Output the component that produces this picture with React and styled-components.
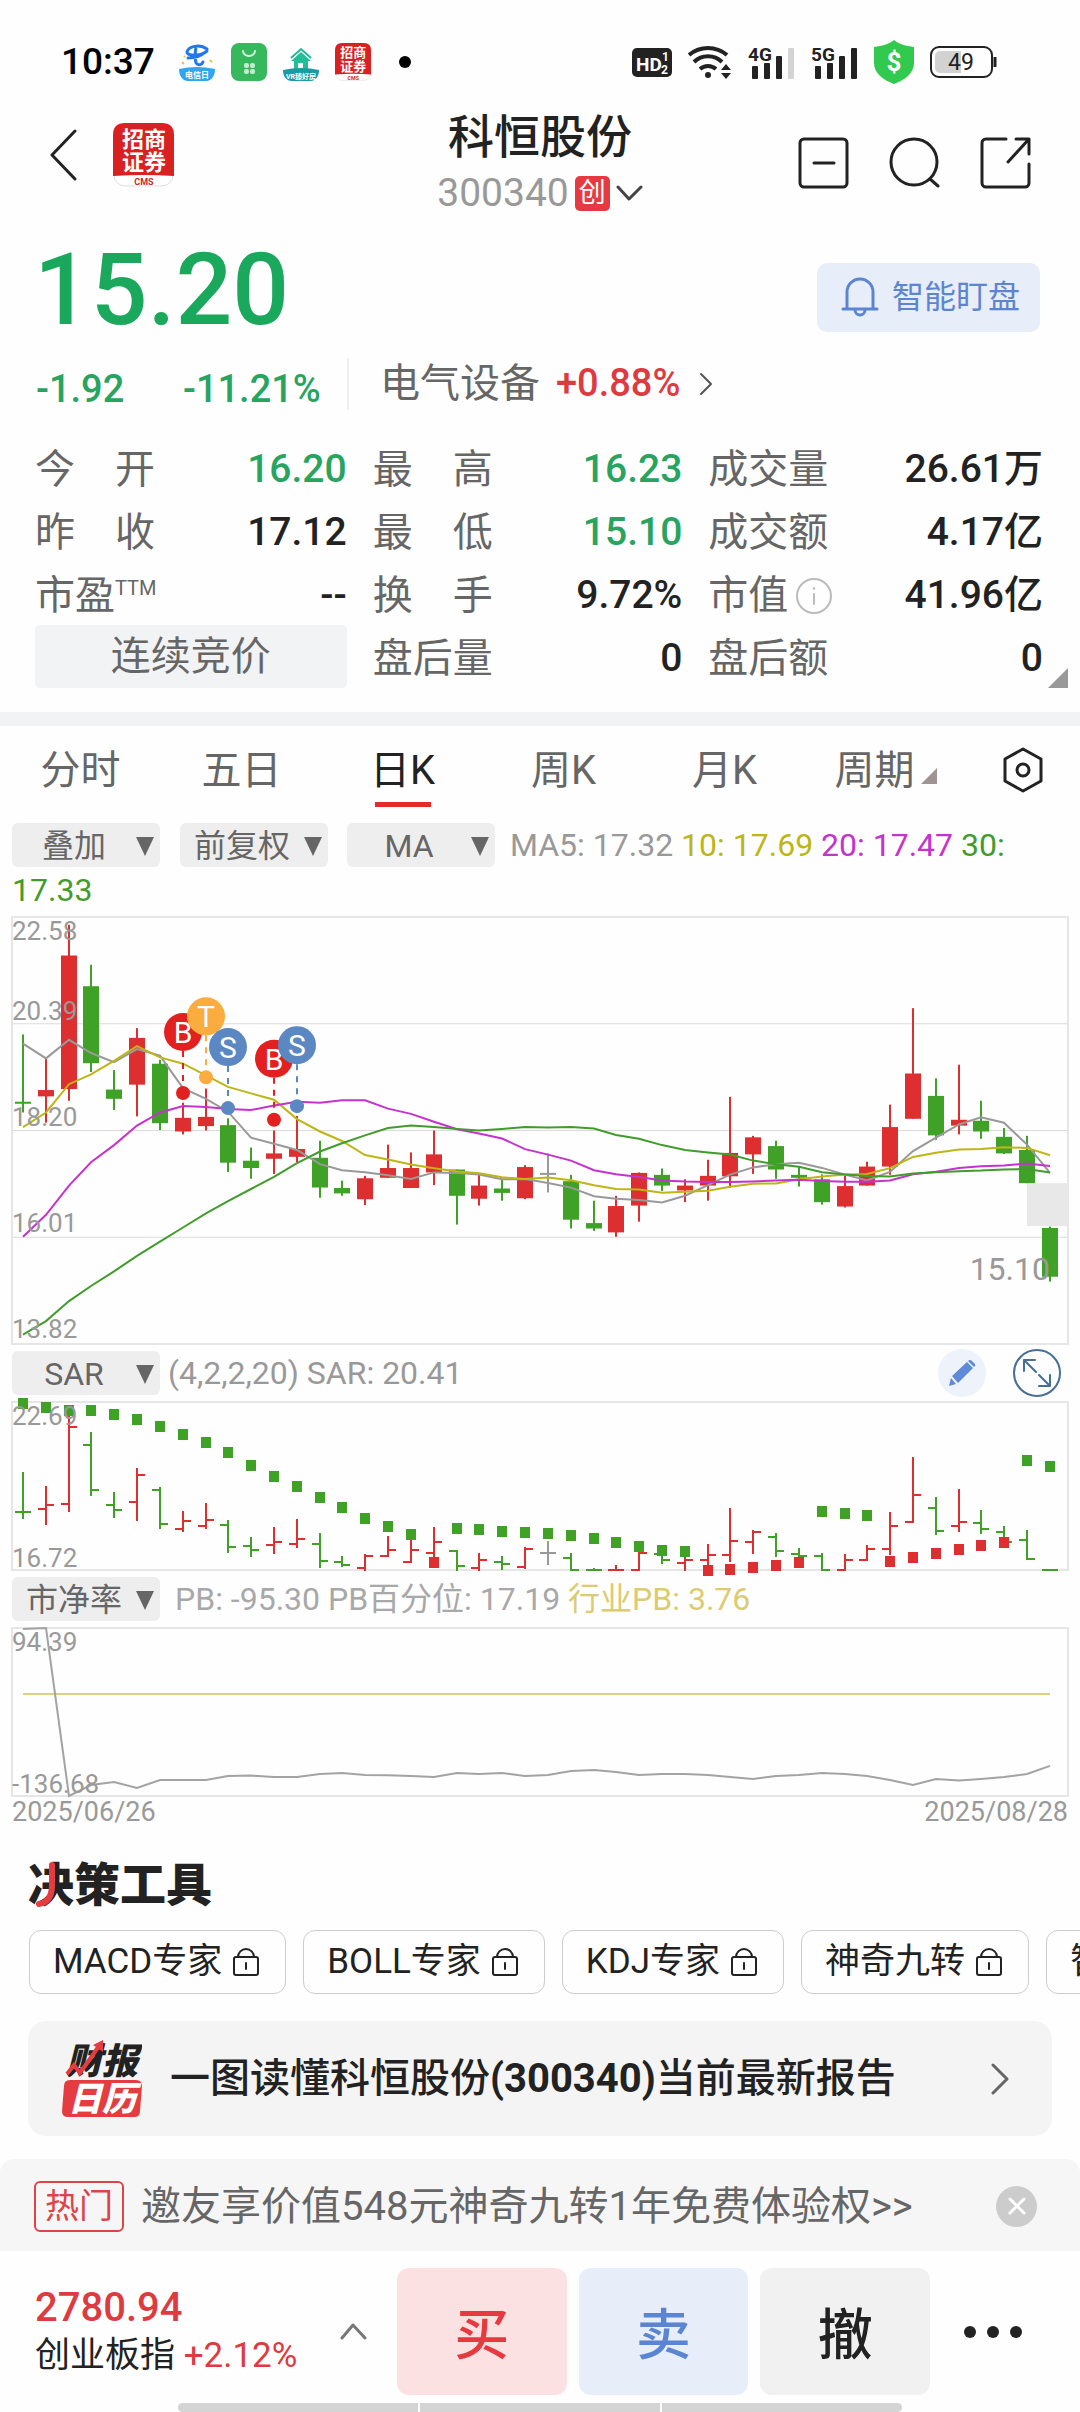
import { useState } from "react";
import styled, { createGlobalStyle } from "styled-components";

const GlobalStyle = createGlobalStyle`
  * {
    box-sizing: border-box;
  }

  body {
    margin: 0;
    background: #fefefe;
    color: #222;
    font-family: Roboto, "Noto Sans CJK SC", sans-serif;
    line-height: 1.2;
  }

  button,
  select {
    font-family: inherit;
    line-height: inherit;
    border: 0;
    padding: 0;
    margin: 0;
    background: transparent;
    color: inherit;
    cursor: pointer;
  }

  svg {
    display: block;
    flex: none;
  }

  svg text {
    font-family: Roboto, "Noto Sans CJK SC", sans-serif;
  }
`;

const colors = {
  up: "#dd2f30",
  down: "#3fa126",
  flat: "#999",
  ma5: "#999",
  ma10: "#bdb614",
  ma20: "#c632cf",
  ma30: "#429c2c",
  grid: "#dcdcdc",
  frame: "#e6e6e6",
  label: "#999",
};

/* ---------- data ---------- */

// [open, high, low, close]
const candles = [
  [18.79, 20.17, 18.57, 18.77],
  [18.9, 19.68, 18.36, 19.03],
  [19.05, 22.42, 18.81, 21.79],
  [21.16, 21.6, 19.4, 19.58],
  [19.04, 19.44, 18.62, 18.85],
  [19.14, 20.3, 18.49, 20.1],
  [19.57, 19.65, 18.21, 18.35],
  [18.18, 18.77, 18.12, 18.46],
  [18.29, 19.06, 18.2, 18.48],
  [18.31, 18.45, 17.35, 17.54],
  [17.58, 17.85, 17.21, 17.43],
  [17.62, 18.2, 17.31, 17.73],
  [17.66, 18.5, 17.55, 17.82],
  [17.64, 17.99, 16.82, 17.03],
  [17.02, 17.17, 16.86, 16.91],
  [16.79, 17.27, 16.67, 17.22],
  [17.23, 17.91, 17.23, 17.43],
  [17.02, 17.75, 17.02, 17.43],
  [17.34, 18.2, 17.08, 17.71],
  [17.4, 17.4, 16.27, 16.86],
  [16.8, 17.29, 16.66, 17.07],
  [17.01, 17.19, 16.76, 16.92],
  [16.81, 17.49, 16.79, 17.45],
  [17.33, 17.73, 16.93, 17.33],
  [17.16, 17.29, 16.19, 16.37],
  [16.3, 16.76, 16.14, 16.19],
  [16.11, 16.86, 16.02, 16.65],
  [16.66, 17.34, 16.33, 17.33],
  [17.29, 17.42, 16.96, 17.07],
  [16.97, 17.2, 16.73, 17.07],
  [17.07, 17.6, 16.76, 17.27],
  [17.26, 18.89, 17.03, 17.74],
  [17.71, 18.09, 17.31, 18.06],
  [17.88, 17.99, 17.21, 17.4],
  [17.29, 17.47, 17.05, 17.23],
  [17.2, 17.3, 16.68, 16.73],
  [16.64, 17.27, 16.62, 17.06],
  [17.07, 17.56, 17.07, 17.46],
  [17.46, 18.73, 17.29, 18.27],
  [18.44, 20.71, 18.44, 19.37],
  [18.91, 19.27, 18.01, 18.1],
  [18.3, 19.55, 18.12, 18.42],
  [18.4, 18.81, 18.03, 18.18],
  [18.07, 18.25, 17.72, 17.73],
  [17.8, 18.09, 17.12, 17.12],
  [16.2, 16.23, 15.1, 15.2],
];

// averages for the first days, whose window starts before the chart
const ma5Head = [19.98, 19.68, 20.06, 19.79];
const ma10Head = [18.27, 18.57, 19.15, 19.35, 19.63, 19.93, 19.7, 19.57, 19.33];
const ma20Head = [
  16.02, 16.47, 17.07, 17.55, 17.9, 18.3, 18.57, 18.7, 18.68, 18.64, 18.62,
  18.71, 18.79, 18.77, 18.82, 18.82, 18.65, 18.54, 18.38,
];
const ma30Head = [
  14.01, 14.29, 14.7, 15.01, 15.31, 15.63, 15.92, 16.21, 16.5, 16.75, 17, 17.25,
  17.53, 17.77, 17.94, 18.1, 18.25, 18.3, 18.27, 18.23, 18.2, 18.23, 18.27,
  18.26, 18.27, 18.24, 18.11, 18.03, 17.9,
];

const sarDots = [
  22.67, 22.51, 22.42, 22.42, 22.25, 22.1, 21.85, 21.56, 21.28, 20.9, 20.45,
  20.06, 19.72, 19.3, 18.95, 18.58, 18.28, 18.01, 17, 18.2, 18.16, 18.12, 18.08,
  18.04, 17.97, 17.87, 17.7, 17.58, 17.43, 17.4, 16.71, 16.74, 16.84, 16.91,
  16.99, 18.83, 18.74, 18.66, 17.05, 17.19, 17.33, 17.48, 17.61, 17.71, 20.63,
  20.4,
];
const isSarUp = (i) => i === 18 || (i >= 30 && i <= 34) || (i >= 38 && i <= 43);

const pbValues = [
  93, 94.39, -136.68, -121.5, -117.4, -125.7, -114.7, -114.7, -114.7, -109.2,
  -108.6, -110.5, -110.5, -106.4, -105, -107.8, -108.2, -109.2, -110.5, -105,
  -106.4, -105, -109.2, -107.8, -102.3, -100.9, -103.7, -107.8, -106.4, -106.4,
  -107.8, -110.5, -113.3, -109.2, -107.8, -105, -106.4, -109.2, -114.7, -121.5,
  -113.3, -115.3, -113.3, -110.5, -106.4, -95.3,
];

const trades = [
  { day: 7, type: "B", price: 18.97 },
  { day: 8, type: "T", price: 19.29 },
  { day: 9, type: "S", price: 18.66 },
  { day: 11, type: "B", price: 18.42 },
  { day: 12, type: "S", price: 18.7 },
];
const tradeColors = { B: "#e22020", T: "#fbac3e", S: "#5b87c2" };

const stats = [
  { label: ["今", "开"], value: "16.20", tone: "green" },
  { label: ["最", "高"], value: "16.23", tone: "green" },
  { label: ["成交量"], value: "26.61万" },
  { label: ["昨", "收"], value: "17.12" },
  { label: ["最", "低"], value: "15.10", tone: "green" },
  { label: ["成交额"], value: "4.17亿" },
  { label: ["市盈"], sup: "TTM", value: "--" },
  { label: ["换", "手"], value: "9.72%" },
  { label: ["市值"], info: true, value: "41.96亿" },
  { button: "连续竞价" },
  { label: ["盘后量"], value: "0" },
  { label: ["盘后额"], value: "0" },
];

const tabs = ["分时", "五日", "日K", "周K", "月K", "周期"];
const tools = ["MACD专家", "BOLL专家", "KDJ专家", "神奇九转", "智能选股"];

/* ---------- charts ---------- */

const CHART_WIDTH = 1056;
const dayX = (i) => Math.round(11 + i * 22.82);
const scale = (max, min, height) => (v) => ((max - v) / (max - min)) * height;
const toPoints = (values, y) =>
  values.map((v, i) => `${dayX(i)},${y(v).toFixed(1)}`).join(" ");
const candleColor = ([open, , , close]) => {
  if (open === close) return colors.flat;
  return close > open ? colors.up : colors.down;
};
const movingAverage = (days, head) =>
  candles.map((_, i) => {
    if (i < head.length) return head[i];
    const part = candles.slice(i - days + 1, i + 1);
    return part.reduce((sum, c) => sum + c[3], 0) / days;
  });

const ChartSvg = styled.svg`
  width: 100%;
  height: auto;
  overflow: visible;
`;

const Frame = ({ height }) => (
  <rect
    width={CHART_WIDTH}
    height={height}
    fill="none"
    stroke={colors.frame}
    strokeWidth="2"
  />
);

const AxisLabel = ({ y, children }) => (
  <text x="0" y={y} fontSize="26" fill={colors.label}>
    {children}
  </text>
);

const KLineChart = () => {
  const height = 427;
  const y = scale(22.58, 13.82, height);
  const lines = [
    [movingAverage(5, ma5Head), colors.ma5],
    [movingAverage(10, ma10Head), colors.ma10],
    [movingAverage(20, ma20Head), colors.ma20],
    [movingAverage(30, ma30Head), colors.ma30],
  ];
  return (
    <ChartSvg viewBox={`0 0 ${CHART_WIDTH} ${height}`}>
      <Frame height={height} />
      {[20.39, 18.2, 16.01].map((price) => (
        <line
          key={price}
          x2={CHART_WIDTH}
          y1={y(price)}
          y2={y(price)}
          stroke={colors.grid}
        />
      ))}
      <rect
        x="1015"
        y={y(17.12)}
        width="41"
        height={y(16.24) - y(17.12)}
        fill="#e8e8e8"
      />
      {candles.map((c, i) => {
        const [open, high, low, close] = c;
        const top = y(Math.max(open, close));
        const bottom = y(Math.min(open, close));
        return (
          <g key={i} fill={candleColor(c)}>
            <rect x={dayX(i) - 1} y={y(high)} width="2" height={y(low) - y(high)} />
            <rect
              x={dayX(i) - 8}
              y={top}
              width="16"
              height={Math.max(bottom - top, 2)}
            />
          </g>
        );
      })}
      {lines.map(([values, color]) => (
        <polyline
          key={color}
          points={toPoints(values, y)}
          fill="none"
          stroke={color}
          strokeWidth="2"
        />
      ))}
      {trades.map(({ day, type, price }) => (
        <g key={day} fill={tradeColors[type]}>
          <line
            x1={dayX(day)}
            x2={dayX(day)}
            y1={y(price) - 42}
            y2={y(price)}
            stroke={tradeColors[type]}
            strokeWidth="2"
            strokeDasharray="6 6"
          />
          <circle cx={dayX(day)} cy={y(price)} r="7" />
          <circle cx={dayX(day)} cy={y(price) - 61} r="19" />
          <text
            x={dayX(day)}
            y={y(price) - 50}
            fontSize="30"
            textAnchor="middle"
            fill="#fff"
          >
            {type}
          </text>
        </g>
      ))}
      <AxisLabel y="23">22.58</AxisLabel>
      <AxisLabel y="103">20.39</AxisLabel>
      <AxisLabel y="209">18.20</AxisLabel>
      <AxisLabel y="315">16.01</AxisLabel>
      <AxisLabel y="421">13.82</AxisLabel>
      <text x="1038" y="363" fontSize="32" textAnchor="end" fill={colors.label}>
        15.10
      </text>
    </ChartSvg>
  );
};

const SarChart = () => {
  const height = 168;
  const y = scale(22.69, 16.72, height);
  const clampY = (v) => Math.round(Math.min(y(v), height));
  return (
    <ChartSvg viewBox={`0 0 ${CHART_WIDTH} ${height}`}>
      <Frame height={height} />
      {candles.map((c, i) => {
        const [open, high, low, close] = c;
        const x = dayX(i);
        return (
          <path
            key={i}
            d={`M${x} ${clampY(high) - 1}V${clampY(low) + 1}
              M${x - 8} ${clampY(open)}H${x}M${x} ${clampY(close)}H${x + 8}`}
            stroke={candleColor(c)}
            strokeWidth="2"
          />
        );
      })}
      {sarDots.map((v, i) => (
        <rect
          key={i}
          x={dayX(i) - 5}
          y={Math.round(y(v)) - 5}
          width="10"
          height="11"
          fill={isSarUp(i) ? colors.up : colors.down}
        />
      ))}
      <AxisLabel y="23">22.69</AxisLabel>
      <AxisLabel y="165">16.72</AxisLabel>
    </ChartSvg>
  );
};

const PbChart = () => {
  const height = 168;
  const y = scale(94.39, -136.68, height);
  return (
    <ChartSvg viewBox={`0 0 ${CHART_WIDTH} ${height}`}>
      <Frame height={height} />
      <line
        x1={dayX(0)}
        x2={dayX(45)}
        y1={y(3.76)}
        y2={y(3.76)}
        stroke="#dfd07c"
        strokeWidth="2"
      />
      <polyline
        points={toPoints(pbValues, y)}
        fill="none"
        stroke="#a3a3a3"
        strokeWidth="2"
      />
      <AxisLabel y="23">94.39</AxisLabel>
      <AxisLabel y="165">-136.68</AxisLabel>
    </ChartSvg>
  );
};

/* ---------- icons ---------- */

const TelecomIcon = () => (
  <svg width="36" height="38" viewBox="0 0 36 38">
    <path
      d="M28 6C20 0 9 4 8 9c0 4 13 5 20-1M17 4c-1 6-1 12 0 16 2 3 6 2 7-1M9 15c6 0 12-1 16-5"
      fill="none"
      stroke="#2278ea"
      strokeWidth="3"
      strokeLinecap="round"
    />
    <path d="M0 26q18-4 36 0c0 6-3 12-9 12H9c-6 0-9-6-9-12Z" fill="#30a5f2" />
    <path d="M3 19l2 2M31 17l2 2M5 13l1 1" stroke="#f3bf43" strokeWidth="2" />
    <text x="18" y="35" fontSize="8" fontWeight="700" textAnchor="middle" fill="#fff">
      电信日
    </text>
  </svg>
);

const StoreIcon = () => (
  <svg width="36" height="38" viewBox="0 0 36 38">
    <rect width="36" height="38" rx="8" fill="#36b85d" />
    <path
      d="M12 8a6 5 0 0 0 12 0"
      fill="none"
      stroke="#d6f6df"
      strokeWidth="2"
      strokeLinecap="round"
    />
    <g fill="#c2edcd">
      <rect x="13" y="20" width="5" height="5" rx="2" />
      <rect x="19" y="20" width="5" height="5" rx="2" />
      <rect x="13" y="26" width="5" height="5" rx="2" />
      <rect x="19" y="26" width="5" height="5" rx="2" />
    </g>
  </svg>
);

const HouseIcon = () => (
  <svg width="36" height="38" viewBox="0 0 36 38">
    <path d="M8 15 18 6l10 9" fill="none" stroke="#22b894" strokeWidth="2" />
    <path d="M18 9 8 18h3v8h4v-6h5v6h5v-8h3Z" fill="#20bf98" />
    <path d="M0 27q18-4 36 0c0 6-3 11-9 11H9c-6 0-9-5-9-11Z" fill="#1a9aa3" />
    <text x="18" y="36" fontSize="7" fontWeight="700" textAnchor="middle" fill="#fff">
      VR臻好房
    </text>
  </svg>
);

const CmsLogo = ({ width, height }) => (
  <svg width={width} height={height} viewBox="0 0 61 64">
    <rect x="1" y="1" width="59" height="62" rx="11" fill="#fff" stroke="#ddd" />
    <path d="M0 53V12Q0 0 12 0h37q12 0 12 12v41q-30-2-61 0Z" fill="#d92122" />
    <g fontWeight="700" textAnchor="middle">
      <text x="31" y="24" fontSize="22" fill="#fff">
        招商
      </text>
      <text x="31" y="47" fontSize="22" fill="#fff">
        证券
      </text>
      <text x="31" y="62" fontSize="9" fill="#c9292a">
        CMS
      </text>
    </g>
  </svg>
);

const HdIcon = () => (
  <svg width="40" height="29" viewBox="0 0 40 29">
    <rect width="40" height="29" rx="5" fill="#222" />
    <g fill="#fff" fontWeight="700">
      <text x="4" y="23" fontSize="19">
        HD
      </text>
      <text x="30" y="13" fontSize="12">
        1
      </text>
      <text x="29" y="26" fontSize="12">
        2
      </text>
    </g>
  </svg>
);

const WifiIcon = () => (
  <svg width="44" height="36" viewBox="0 0 44 36" fill="none" stroke="#222">
    <path d="M1 11a29 29 0 0 1 38 0M6 18a20 20 0 0 1 28 0M12 25a12 12 0 0 1 16 0" strokeWidth="4" />
    <circle cx="20" cy="31" r="3" fill="#222" stroke="none" />
    <path d="M38 20l5 6h-10ZM38 35l5-6h-10Z" fill="#222" stroke="none" />
  </svg>
);

const SignalIcon = ({ name, weak }) => (
  <svg width="47" height="36" viewBox="0 0 47 36" fill="#222">
    <text x="0" y="17" fontSize="19" fontWeight="700">
      {name}
    </text>
    <rect x="4" y="22" width="6" height="13" rx="1" />
    <rect x="16" y="19" width="6" height="16" rx="1" />
    <rect x="28" y="12" width="6" height="23" rx="1" />
    <rect x="40" y="4" width="6" height="31" rx="1" fill={weak ? "#d4d4d4" : "#222"} />
  </svg>
);

const ShieldIcon = () => (
  <svg width="40" height="44" viewBox="0 0 40 44">
    <path
      d="M20 0c5 4 12 6 20 7v16c0 10-9 17-20 21C9 40 0 33 0 23V7c8-1 15-3 20-7Z"
      fill="#31c94e"
    />
    <text x="20" y="31" fontSize="26" fontWeight="700" textAnchor="middle" fill="#fff">
      $
    </text>
  </svg>
);

const BatteryIcon = () => (
  <svg width="67" height="32" viewBox="0 0 67 32">
    <rect x="1" y="1" width="61" height="30" rx="8" fill="none" stroke="#222" strokeWidth="2" />
    <path d="M31 5H10a5 5 0 0 0-5 5v12a5 5 0 0 0 5 5h21Z" fill="#d2d2d2" />
    <path d="M65 11v10" stroke="#222" strokeWidth="3" />
    <text x="31" y="24" fontSize="23" textAnchor="middle" fill="#222">
      49
    </text>
  </svg>
);

const LineIcon = ({ width, height, d, color = "#222", weight = 3, children }) => (
  <svg
    width={width}
    height={height}
    viewBox={`0 0 ${width} ${height}`}
    fill="none"
    stroke={color}
    strokeWidth={weight}
    strokeLinecap="round"
    strokeLinejoin="round"
  >
    {d && <path d={d} />}
    {children}
  </svg>
);

const LockIcon = () => (
  <LineIcon width={26} height={30} weight={2}>
    <rect x="1" y="10" width="24" height="18" rx="2" />
    <path d="M5 10a8 8 0 0 1 16 0M13 16v6" />
  </LineIcon>
);

const ReportLogo = () => (
  <svg width="80" height="78" viewBox="0 0 80 78">
    <g fontWeight="900" fontStyle="italic">
      <text x="4" y="34" fontSize="36" fill="#222">
        财报
      </text>
      <path d="M8 40h66q6 0 6 6l-2 25q0 6-6 6H6q-6 0-6-6l2-25q0-6 6-6Z" fill="#e53c42" />
      <text x="6" y="71" fontSize="34" fill="#fff">
        日历
      </text>
    </g>
    <path d="M5 34l7-9 6 8L37 6" fill="none" stroke="#e53c42" strokeWidth="4" />
    <path d="M31 5l10-5v12Z" fill="#e53c42" />
  </svg>
);

/* ---------- top ---------- */

const StatusBar = styled.div`
  display: flex;
  align-items: center;
  justify-content: space-between;
  height: 88px;
  padding: 36px 83px 0 61px;
`;

const StatusGroup = styled.div`
  display: flex;
  align-items: center;
  gap: ${({ $gap }) => $gap}px;
`;

const Clock = styled.span`
  margin-right: 8px;
  font-size: 37px;
  font-weight: 500;
  line-height: 44px;
  color: #000;
`;

const Dot = styled.span`
  width: 12px;
  height: 12px;
  margin-left: 12px;
  border-radius: 50%;
  background: #000;
`;

const Header = styled.header`
  display: grid;
  grid-template-columns: 1fr auto 1fr;
  height: 132px;
  padding: 0 49px;
`;

const HeaderLeft = styled.div`
  display: flex;
  align-items: center;
  gap: 36px;
`;

const HeaderRight = styled.div`
  display: flex;
  align-items: center;
  justify-content: flex-end;
  gap: 40px;
  padding-top: 16px;
`;

const StockTitle = styled.div`
  display: flex;
  flex-direction: column;
  align-items: center;
  padding-top: 22px;
`;

const StockName = styled.h1`
  margin: 0;
  font-size: 46px;
  font-weight: 500;
  line-height: 54px;
`;

const StockCode = styled.button`
  && {
    display: flex;
    align-items: center;
    gap: 6px;
    font-size: 39px;
    line-height: 58px;
    color: #999;
  }
`;

const BoardTag = styled.span`
  width: 35px;
  border-radius: 5px;
  background: #e63a40;
  color: #fff;
  font-size: 27px;
  line-height: 35px;
  text-align: center;
`;

const PriceRow = styled.div`
  display: flex;
  align-items: center;
  justify-content: space-between;
  padding: 16px 40px 0 34px;
`;

const Price = styled.strong`
  font-size: 100px;
  font-weight: 500;
  line-height: 108px;
  color: #1aa85c;
`;

const WatchButton = styled.button`
  && {
    display: flex;
    align-items: center;
    gap: 13px;
    height: 69px;
    margin-top: 14px;
    padding: 0 20px 0 24px;
    border-radius: 10px;
    background: #e7edf9;
    color: #5b85d1;
    font-size: 32px;
  }
`;

const ChangeRow = styled.div`
  display: flex;
  align-items: center;
  height: 60px;
  margin-top: 10px;
  padding-left: 36px;
  font-size: 38px;
`;

const Changes = styled.div`
  display: flex;
  align-items: center;
  width: 313px;
  height: 52px;
  padding-top: 12px;
  border-right: 2px solid #f0f0f0;
  font-weight: 500;
  color: #27a45f;

  > span:first-child {
    width: 147px;
  }
`;

const Industry = styled.a`
  display: flex;
  align-items: center;
  gap: 16px;
  padding-left: 31px;
  color: #666;
  font-size: 40px;
  text-decoration: none;

  > b {
    margin-right: 2px;
    font-size: 38px;
    font-weight: 500;
    color: #dd3b40;
  }
`;

const Stats = styled.dl`
  position: relative;
  display: grid;
  grid-template-columns: 311fr 309fr 334fr;
  grid-auto-rows: 63px;
  column-gap: 26px;
  margin: 22px 0 0;
  padding: 0 37px 24px 35px;
  border-bottom: 14px solid #f2f3f5;
`;

const Stat = styled.div`
  display: flex;
  align-items: center;
  justify-content: space-between;
  padding-top: 4px;
`;

const StatLabel = styled.dt`
  display: flex;
  align-items: center;
  justify-content: ${({ $spread }) => ($spread ? "space-between" : "flex-start")};
  gap: ${({ $spread }) => ($spread ? 0 : 8)}px;
  width: 120px;
  font-size: 40px;
  color: #666;
  white-space: nowrap;

  sup {
    margin: 0 0 16px -8px;
    font-size: 20px;
    line-height: 20px;
  }
`;

const StatValue = styled.dd`
  margin: 0;
  font-size: 39px;
  font-weight: 500;
  color: ${({ $tone }) => ($tone === "green" ? "#27a45f" : "#222")};
`;

const PhaseButton = styled.button`
  && {
    border-radius: 5px;
    background: #f2f3f5;
    color: #666;
    font-size: 40px;
  }
`;

const Corner = styled.span`
  position: absolute;
  right: 12px;
  bottom: 24px;
  border-style: solid;
  border-width: 0 0 20px 20px;
  border-color: transparent transparent #999;
`;

/* ---------- chart section ---------- */

const TabBar = styled.nav`
  display: flex;
  height: 90px;
  margin-bottom: 5px;
`;

const Tab = styled.button`
  && {
    position: relative;
    flex: 1;
    font-size: 40px;
    color: ${({ $active }) => ($active ? "#222" : "#666")};
  }

  &::after {
    content: "";
    display: ${({ $active }) => ($active ? "block" : "none")};
    position: absolute;
    left: calc(50% - 28px);
    bottom: 9px;
    width: 56px;
    height: 5px;
    background: #e42a2a;
  }
`;

const TabCorner = styled.span`
  display: inline-block;
  margin-left: 6px;
  border-style: solid;
  border-width: 0 0 16px 16px;
  border-color: transparent transparent #a09393;
`;

const SettingsButton = styled.button`
  && {
    display: flex;
    align-items: center;
    justify-content: center;
    width: 114px;
    padding-bottom: 2px;
  }
`;

const ChartArea = styled.section`
  padding: 0 12px;
`;

const MaLegend = styled.div`
  margin-bottom: 4px;
  padding-top: 2px;
  font-size: 32px;
  line-height: 45px;
  color: ${colors.ma5};
`;

const IndicatorRow = styled.div`
  display: flex;
  align-items: center;
  height: 58px;
  font-size: 32px;
  color: ${({ $muted }) => ($muted ? "#a8a8a8" : "#999")};
  white-space: pre;
`;

const PickerBox = styled.label`
  display: inline-block;
  position: relative;
  width: 148px;
  height: 44px;
  margin-right: ${({ $gap }) => $gap}px;
  vertical-align: top;

  &::after {
    content: "";
    position: absolute;
    top: 14px;
    right: 6px;
    border-style: solid;
    border-width: 19px 9px 0;
    border-color: #666 transparent transparent;
    pointer-events: none;
  }
`;

const PickerSelect = styled.select`
  && {
    display: block;
    appearance: none;
    width: 100%;
    height: 44px;
    padding: 2px 24px 0 0;
    border-radius: 6px;
    background: #eee;
    color: #666;
    font-size: 32px;
    line-height: 42px;
    text-align: center;
    text-align-last: center;
  }
`;

const Tint = styled.span`
  color: ${({ $color }) => $color};
`;

const RowTools = styled.div`
  display: flex;
  gap: 27px;
  margin-left: auto;
  margin-right: 7px;
`;

const RoundButton = styled.button`
  && {
    display: flex;
    align-items: center;
    justify-content: center;
    width: 48px;
    height: 48px;
    border: ${({ $outlined }) => ($outlined ? "2px solid #456f96" : "0")};
    border-radius: 50%;
    background: ${({ $outlined }) => ($outlined ? "transparent" : "#edf2fb")};
  }
`;

const Dates = styled.div`
  display: flex;
  justify-content: space-between;
  font-size: 27px;
  line-height: 32px;
  color: #999;
`;

/* ---------- tools ---------- */

const ToolsTitle = styled.h2`
  position: relative;
  margin: 32px 0 20px 28px;
  font-size: 46px;
  font-weight: 900;
  line-height: 50px;

  > svg {
    position: absolute;
    left: 8px;
    top: 2px;
  }
`;

const ChipList = styled.div`
  display: flex;
  gap: 17px;
  padding-left: 29px;
  overflow: hidden;
`;

const Chip = styled.button`
  && {
    display: flex;
    flex: none;
    align-items: center;
    gap: 11px;
    height: 64px;
    padding: 0 26px 0 23px;
    border: 1px solid #ccc;
    border-radius: 12px;
    font-size: 35px;
    white-space: nowrap;
  }
`;

const ReportCard = styled.a`
  display: flex;
  align-items: center;
  height: 115px;
  margin: 27px 28px 23px;
  padding: 0 43px 0 34px;
  border-radius: 18px;
  background: #f4f4f4;
  color: #222;
  font-size: 40px;
  font-weight: 500;
  text-decoration: none;

  > span {
    flex: 1;
    padding-left: 28px;
  }
`;

const Promo = styled.div`
  display: flex;
  align-items: center;
  height: 92px;
  padding: 2px 43px 0 34px;
  border-radius: 14px 14px 0 0;
  background: #f6f6f6;
`;

const HotTag = styled.span`
  width: 90px;
  border: 2px solid #dc4448;
  border-radius: 6px;
  color: #dc4448;
  font-size: 34px;
  line-height: 47px;
  text-align: center;
`;

const PromoLink = styled.a`
  flex: 1;
  padding: 2px 0 0 17px;
  color: #666;
  font-size: 40px;
  text-decoration: none;
`;

const CloseButton = styled.button`
  && {
    display: flex;
    align-items: center;
    justify-content: center;
    width: 41px;
    height: 41px;
    border-radius: 50%;
    background: #ccc;
  }
`;

/* ---------- bottom ---------- */

const BottomBar = styled.footer`
  display: flex;
  padding-top: 17px;
`;

const IndexButton = styled.button`
  && {
    display: flex;
    align-items: center;
    justify-content: space-between;
    width: 397px;
    padding: 0 30px 0 35px;
    text-align: left;
  }
`;

const IndexValue = styled.div`
  font-size: 40px;
  font-weight: 500;
  line-height: 48px;
  color: #dd3b40;
`;

const IndexName = styled.div`
  font-size: 35px;
  line-height: 48px;
  white-space: nowrap;
`;

const TradeButtons = styled.div`
  display: flex;
  flex: 1;
  gap: 12px;
`;

const TradeButton = styled.button`
  && {
    flex: 1;
    height: 127px;
    padding-top: 6px;
    border-radius: 12px;
    background: ${({ $background }) => $background};
    color: ${({ $color }) => $color};
    font-size: 55px;
    font-weight: 500;
  }
`;

const MoreButton = styled.button`
  && {
    display: flex;
    align-items: center;
    justify-content: center;
    width: 150px;
    padding-right: 24px;
  }
`;

const GestureBar = styled.div`
  display: flex;
  gap: 2px;
  width: 67%;
  height: 9px;
  margin: 8px auto 0;
  border-radius: 5px;
  overflow: hidden;

  > span {
    flex: 1;
    background: #d4d4d4;
  }
`;

const Picker = ({ label, gap }) => (
  <PickerBox $gap={gap}>
    <PickerSelect aria-label={label} defaultValue={label}>
      <option>{label}</option>
    </PickerSelect>
  </PickerBox>
);

const App = () => {
  const [activeTab, setActiveTab] = useState("日K");

  return (
    <main>
      <GlobalStyle />
      <StatusBar>
        <StatusGroup $gap={16}>
          <Clock>10:37</Clock>
          <TelecomIcon />
          <StoreIcon />
          <HouseIcon />
          <CmsLogo width={36} height={38} />
          <Dot />
        </StatusGroup>
        <StatusGroup $gap={16}>
          <HdIcon />
          <WifiIcon />
          <SignalIcon name="4G" weak />
          <SignalIcon name="5G" />
          <ShieldIcon />
          <BatteryIcon />
        </StatusGroup>
      </StatusBar>

      <Header>
        <HeaderLeft>
          <button aria-label="返回">
            <LineIcon width={28} height={52} d="M26 2 3 26l23 24" />
          </button>
          <CmsLogo width={61} height={64} />
        </HeaderLeft>
        <StockTitle>
          <StockName>科恒股份</StockName>
          <StockCode>
            300340
            <BoardTag>创</BoardTag>
            <LineIcon width={27} height={17} d="M2 2l11 12L25 2" color="#444" />
          </StockCode>
        </StockTitle>
        <HeaderRight>
          <button aria-label="删除自选">
            <LineIcon width={51} height={52}>
              <rect x="2" y="2" width="47" height="48" rx="4" />
              <path d="M16 26h20" />
            </LineIcon>
          </button>
          <button aria-label="搜索">
            <LineIcon width={51} height={52}>
              <circle cx="25" cy="25" r="23" />
              <path d="M41 42l8 7" />
            </LineIcon>
          </button>
          <button aria-label="分享">
            <LineIcon
              width={51}
              height={52}
              d="M26 2H6a4 4 0 0 0-4 4v40a4 4 0 0 0 4 4h39a4 4 0 0 0 4-4V27M36 2h13v15M49 2 28 25"
            />
          </button>
        </HeaderRight>
      </Header>

      <PriceRow>
        <Price>15.20</Price>
        <WatchButton>
          <LineIcon
            width={38}
            height={40}
            d="M2 32h34M6 32V15a13 13 0 0 1 26 0v17M14 33a5 5 0 0 0 10 0"
            color="#5b85d1"
          />
          智能盯盘
        </WatchButton>
      </PriceRow>
      <ChangeRow>
        <Changes>
          <span>-1.92</span>
          <span>-11.21%</span>
        </Changes>
        <Industry href="#industry">
          电气设备
          <b>+0.88%</b>
          <LineIcon width={16} height={26} d="M3 3l10 10L3 23" color="#555" weight={2} />
        </Industry>
      </ChangeRow>

      <Stats>
        {stats.map(({ label, sup, info, value, tone, button }) =>
          button ? (
            <PhaseButton key={button}>{button}</PhaseButton>
          ) : (
            <Stat key={label.join("")}>
              <StatLabel $spread={label.length > 1}>
                {label.map((part) => (
                  <span key={part}>{part}</span>
                ))}
                {sup && <sup>{sup}</sup>}
                {info && (
                  <LineIcon width={36} height={36} color="#bbb" weight={2}>
                    <circle cx="18" cy="18" r="17" />
                    <path d="M18 16v10M18 10v1" />
                  </LineIcon>
                )}
              </StatLabel>
              <StatValue $tone={tone}>{value}</StatValue>
            </Stat>
          )
        )}
        <Corner />
      </Stats>

      <TabBar>
        {tabs.map((tab) => (
          <Tab key={tab} $active={tab === activeTab} onClick={() => setActiveTab(tab)}>
            {tab}
            {tab === "周期" && <TabCorner />}
          </Tab>
        ))}
        <SettingsButton aria-label="设置">
          <LineIcon width={42} height={46} d="M21 2l18 10v22L21 44 3 34V12Z">
            <circle cx="21" cy="23" r="6" />
          </LineIcon>
        </SettingsButton>
      </TabBar>

      <ChartArea>
        <MaLegend>
          <Picker label="叠加" gap={20} />
          <Picker label="前复权" gap={19} />
          <Picker label="MA" gap={15} />
          MA5: 17.32 <Tint $color={colors.ma10}>10: 17.69</Tint>{" "}
          <Tint $color={colors.ma20}>20: 17.47</Tint>{" "}
          <Tint $color={colors.ma30}>30:</Tint>{" "}
          <Tint $color={colors.ma30}>17.33</Tint>
        </MaLegend>
        <KLineChart />
        <IndicatorRow>
          <Picker label="SAR" gap={8} />
          (4,2,2,20) SAR: 20.41
          <RowTools>
            <RoundButton aria-label="编辑">
              <svg width="28" height="28" viewBox="0 0 28 28" fill="#5f8ad8">
                <path d="M1 27l2-8 5 6ZM4 17 19 3l6 6L10 24ZM20 2q2-2 4 0l3 3q1 2-1 3Z" />
              </svg>
            </RoundButton>
            <RoundButton $outlined aria-label="全屏">
              <LineIcon
                width={28}
                height={28}
                d="M1 12V1h11M1 1l12 12M27 16v11H16M27 27 16 16"
                color="#456f96"
                weight={2}
              />
            </RoundButton>
          </RowTools>
        </IndicatorRow>
        <SarChart />
        <IndicatorRow $muted>
          <Picker label="市净率" gap={15} />
          PB: -95.30 PB百分位: 17.19 <Tint $color="#dccb70">行业PB: 3.76</Tint>
        </IndicatorRow>
        <PbChart />
        <Dates>
          <span>2025/06/26</span>
          <span>2025/08/28</span>
        </Dates>
      </ChartArea>

      <ToolsTitle>
        决策工具
        <LineIcon width={22} height={46} d="M16 3v20q0 17-13 19" color="#e53c42" weight={6} />
      </ToolsTitle>
      <ChipList>
        {tools.map((tool) => (
          <Chip key={tool}>
            {tool}
            <LockIcon />
          </Chip>
        ))}
      </ChipList>
      <ReportCard href="#report">
        <ReportLogo />
        <span>
          一图读懂科恒股份<b>(300340)</b>当前最新报告
        </span>
        <LineIcon width={18} height={32} d="M2 2l14 14L2 30" color="#666" />
      </ReportCard>

      <Promo>
        <HotTag>热门</HotTag>
        <PromoLink href="#promo">邀友享价值548元神奇九转1年免费体验权&gt;&gt;</PromoLink>
        <CloseButton aria-label="关闭">
          <LineIcon width={18} height={18} d="M2 2l14 14M16 2 2 16" color="#fff" />
        </CloseButton>
      </Promo>

      <BottomBar>
        <IndexButton>
          <div>
            <IndexValue>2780.94</IndexValue>
            <IndexName>
              创业板指 <Tint $color="#dd3b40">+2.12%</Tint>
            </IndexName>
          </div>
          <LineIcon width={27} height={17} d="M2 15 13 2l12 13" color="#777" />
        </IndexButton>
        <TradeButtons>
          <TradeButton $background="#fce1e2" $color="#e63a40">
            买
          </TradeButton>
          <TradeButton $background="#e7edf9" $color="#5b85d1">
            卖
          </TradeButton>
          <TradeButton $background="#f1f1f1" $color="#222">
            撤
          </TradeButton>
        </TradeButtons>
        <MoreButton aria-label="更多">
          <svg width="58" height="12" viewBox="0 0 58 12" fill="#222">
            <circle cx="6" cy="6" r="6" />
            <circle cx="29" cy="6" r="6" />
            <circle cx="52" cy="6" r="6" />
          </svg>
        </MoreButton>
      </BottomBar>
      <GestureBar>
        <span />
        <span />
        <span />
      </GestureBar>
    </main>
  );
};

export default App;
